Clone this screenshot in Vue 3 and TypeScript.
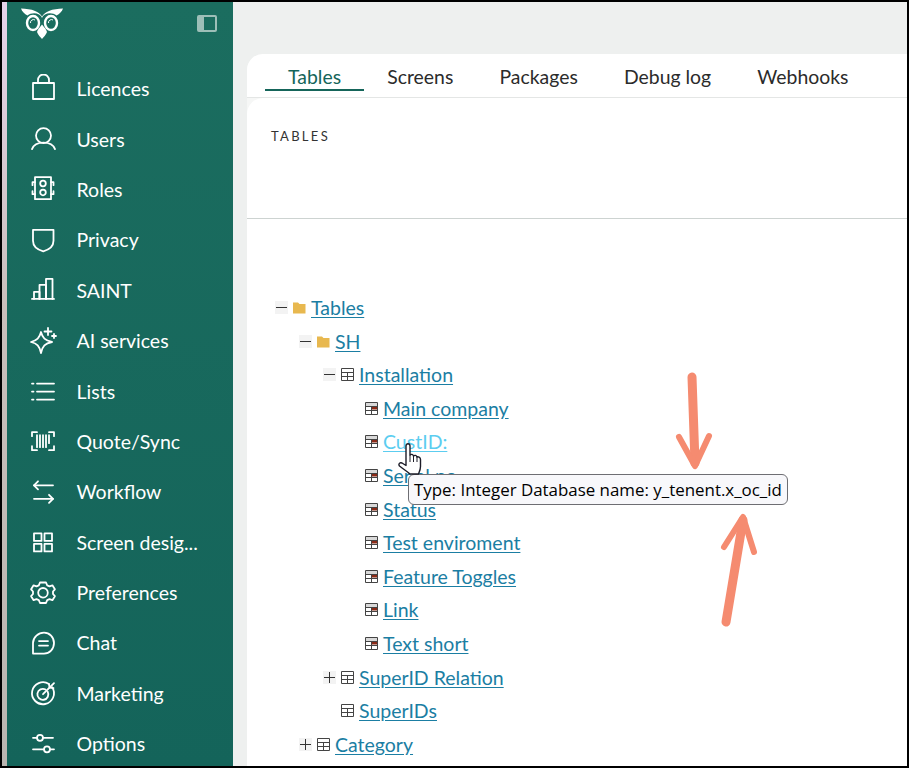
<script setup lang="ts">
interface NavItem {
  label: string
  paths: string[]
}

interface TreeRow {
  label: string
  level: number
  toggle?: 'minus' | 'plus'
  icon: 'folder' | 'table' | 'field'
  state?: string
}

const navItems: NavItem[] = [
  { label: 'Licences', paths: ['M33 83h21v16H33z', 'M38 83v-3a5.500 5.500 0 0 1 11 0v3'] },
  { label: 'Users', paths: ['M43.500 128.500a7.500 7.500 0 1 0 0 15a7.500 7.500 0 0 0 0-15z', 'M32 149.500c1.500-4 5.500-6.500 11.500-6.500s10 2.500 11.500 6.500'] },
  {
    label: 'Roles',
    paths: [
      'M35 178h16v22H35z',
      'M43 181.500a2.800 2.800 0 1 0 0 5.600a2.800 2.800 0 0 0 0-5.600z',
      'M43 190.500a2.800 2.800 0 1 0 0 5.600a2.800 2.800 0 0 0 0-5.600z',
      'M35 183h-2.500v3M35 195h-2.500v-3M51 183h2.500v3M51 195h2.500v-3'
    ]
  },
  { label: 'Privacy', paths: ['M33 230h20.500v11c0 5.500-4.500 9-10.250 10.500C37.500 250 33 246.500 33 241z'] },
  { label: 'SAINT', paths: ['M32 299.500h22', 'M34 299.500v-7h5.500v7', 'M39.500 299.500v-14h6.500v14', 'M46 299.500v-20h6.500v20'] },
  {
    label: 'AI services',
    paths: [
      'M41 332c1.500 6 4 8.500 11 10c-7 1.500-9.500 4-11 11c-1.500-7-4-9.500-10-11c6-1.500 8.500-4 10-10z',
      'M48 328v7M44.500 331.500h7',
      'M54 334v4M52 336h4'
    ]
  },
  { label: 'Lists', paths: ['M37 384h17', 'M37 392h17', 'M37 400h17', 'M32 384h1.500', 'M32 392h1.500', 'M32 400h1.500'] },
  {
    label: 'Quote/Sync',
    paths: [
      'M32 437v-4h5M49 433h5v4M54 447v4h-5M37 451h-5v-4',
      'M37 436v12M40 436v12M43 436v12M46 436v12M49 436v8'
    ]
  },
  { label: 'Workflow', paths: ['M34 485.500h19', 'M38 481.500l-4 4l4 4', 'M34 499h19', 'M49 495l4 4l-4 4'] },
  {
    label: 'Screen desig...',
    paths: [
      'M34 534h7.500v7.500H34z',
      'M44.500 534H52v7.500h-7.500z',
      'M34 544.500h7.500V552H34z',
      'M44.500 544.500H52V552h-7.500z'
    ]
  },
  {
    label: 'Preferences',
    paths: [
      'M40 582.500h6l1.200 2.800l2.300 1l2.900-1l2.500 4l-1.900 2.200v2.500l1.900 2.200l-2.500 4l-2.900-1l-2.300 1l-1.200 2.800h-6l-1.200-2.800l-2.300-1l-2.900 1l-2.500-4l1.900-2.200v-2.500l-1.900-2.200l2.500-4l2.900 1l2.300-1z',
      'M43 588a4.800 4.800 0 1 0 0 9.600a4.800 4.800 0 0 0 0-9.600z'
    ]
  },
  {
    label: 'Chat',
    paths: [
      'M44 633c5.500 0 10 4.500 10 10.500s-4.500 10.500-10 10.500H33v-10.500C33 637.500 38.500 633 44 633z',
      'M39 641.500h9',
      'M39 646h9'
    ]
  },
  {
    label: 'Marketing',
    paths: [
      'M49 684.800a11 11 0 1 0 3.200 3.200',
      'M45.500 690.300a5.500 5.500 0 1 0 2.200 2.200',
      'M43 695l11-11',
      'M49 685l.5 3.500l4 .5'
    ]
  },
  {
    label: 'Options',
    paths: [
      'M33 738h4M43 738h10',
      'M40 735a3 3 0 1 0 0 6a3 3 0 0 0 0-6z',
      'M33 749.500h11M50 749.500h4',
      'M47 746.500a3 3 0 1 0 0 6a3 3 0 0 0 0-6z'
    ]
  }
]

const tabs = ['Tables', 'Screens', 'Packages', 'Debug log', 'Webhooks']

const treeRows: TreeRow[] = [
  { label: 'Tables', level: 0, toggle: 'minus', icon: 'folder' },
  { label: 'SH', level: 1, toggle: 'minus', icon: 'folder' },
  { label: 'Installation', level: 2, toggle: 'minus', icon: 'table' },
  { label: 'Main company', level: 3, icon: 'field' },
  { label: 'CustID:', level: 3, icon: 'field', state: 'hover' },
  { label: 'Serial no', level: 3, icon: 'field' },
  { label: 'Status', level: 3, icon: 'field' },
  { label: 'Test enviroment', level: 3, icon: 'field' },
  { label: 'Feature Toggles', level: 3, icon: 'field' },
  { label: 'Link', level: 3, icon: 'field' },
  { label: 'Text short', level: 3, icon: 'field' },
  { label: 'SuperID Relation', level: 2, toggle: 'plus', icon: 'table' },
  { label: 'SuperIDs', level: 2, icon: 'table' },
  { label: 'Category', level: 1, toggle: 'plus', icon: 'table' }
]
</script>

<template>
  <div class="frame">
    <aside class="sidebar">
      <div class="brand">
        <svg class="owl" width="44" height="34" viewBox="0 0 44 34">
          <path fill="#fff" d="M1 1.500c5 .5 10 .5 14 2.500c3 1 5.500 3 7 5.500c1.500-2.500 4-4.500 7-5.500c4-2 9-2 14-2.500c-1 3-3.500 5.500-6.500 7c-3-2.500-8-3-11.500-1c-1.500 1-2.500 2-3 3.500c-.5-1.500-1.500-2.500-3-3.500c-3.500-2-8.500-1.500-11.500 1C4.500 7 2 4.500 1 1.500z" />
          <ellipse cx="13" cy="16" rx="6" ry="7" fill="none" stroke="#fff" stroke-width="2.400" />
          <ellipse cx="31" cy="16" rx="6" ry="7" fill="none" stroke="#fff" stroke-width="2.400" />
          <path fill="none" stroke="#fff" d="M10.500 16a3 3 0 0 1 4.500-3M28.500 16a3 3 0 0 1 4.500-3" />
          <path fill="#fff" d="M22 17.500c2 2.500 4.500 5 5 7.500c-1 3-3.500 5-5 7c-1.500-2-4-4-5-7c.5-2.500 3-5 5-7.500z" />
        </svg>
        <span class="collapse"><span class="collapse-fill"></span></span>
      </div>
      <nav class="nav">
        <a v-for="(item, i) in navItems" :key="item.label" class="nav-item">
          <svg class="nav-icon" width="30" height="30" :viewBox="`28 ${74 + i * 50.4} 30 30`">
            <path v-for="d in item.paths" :key="d" :d="d" />
          </svg>
          <span>{{ item.label }}</span>
        </a>
      </nav>
    </aside>

    <main class="main">
      <div class="card">
        <div class="tabs">
          <span v-for="(tab, i) in tabs" :key="tab" class="tab" :class="{ active: i === 0 }">{{ tab }}</span>
        </div>
        <section class="panel">
          <header class="panel-head">TABLES</header>
          <div class="tree">
            <div v-for="row in treeRows" :key="row.label" class="tree-row" :class="`level-${row.level}`">
              <span class="toggle" :class="row.toggle"></span>
              <svg v-if="row.icon === 'folder'" class="node-icon" width="13" height="13" viewBox="0 0 13 13">
                <path fill="#e8b84f" d="M0 1.500h5l1.500 1.500H12.500V12.500H0z" />
              </svg>
              <svg v-else class="node-icon" width="13" height="13" viewBox="0 0 13 13">
                <path fill="#fff" stroke="#444" d="M.5.500h12v12H.5z" />
                <path v-if="row.icon === 'field'" fill="#d9d9d9" d="M1 1h11v3H1z" />
                <path v-if="row.icon === 'field'" fill="#8a2a17" d="M6.500 4H12v3.500H6.500z" />
                <path fill="none" stroke="#444" d="M.5 4.500h12M.5 8.500h12M6.500 4.500v8" />
              </svg>
              <a class="node-link" :class="row.state">{{ row.label }}</a>
            </div>
          </div>
        </section>
      </div>
    </main>

    <div class="tooltip">Type: Integer Database name: y_tenent.x_oc_id</div>

    <svg class="cursor" width="26" height="34" viewBox="0 0 26 34">
      <path fill="#fff" stroke="#1c1c28" stroke-width="1.400" stroke-linejoin="round" d="M8 3c0-3 4-3 4 0v9c1-1 3-1 3.500 1c1-1 3-1 3.500 1c1-.5 3.500 0 3.500 2.500v7c0 3-1 5-2 7.500H12c-2-2-7-5-10.500-8c-1.500-2 .5-4 2.500-3l4 2.500z" />
      <path fill="none" stroke="#1c1c28" d="M12 12v7M15.500 13v6M19 14v5" />
    </svg>

    <svg class="arrows" width="120" height="270" viewBox="0 0 120 270">
      <path class="shaft" d="M26 9l3 86" />
      <path class="barbs" d="M13 69l16 29l14-30" />
      <path class="shaft" d="M60 254l17-102" />
      <path class="barbs" d="M58 179l19-30l11 35" />
    </svg>
  </div>
</template>

<style>
html,
body {
  margin: 0;
  background: #000;
}
</style>

<style scoped>
.frame {
  position: relative;
  box-sizing: border-box;
  width: 909px;
  height: 768px;
  border: 2px solid #000;
  display: flex;
  overflow: hidden;
  background: linear-gradient(#e6d3ea, #c9bfbb 40%, #b9b5b0) left / 5px 100% no-repeat #eef0ef;
  font-family: Lato, 'Noto Sans', sans-serif;
}

.sidebar {
  box-sizing: border-box;
  width: 226px;
  margin-left: 5px;
  flex: none;
  background: linear-gradient(#1b6d5f, #14645a);
  color: #fff;
}

.brand {
  height: 42px;
  display: flex;
  align-items: flex-start;
  justify-content: space-between;
  padding: 0 16px 0 12.500px;
}

.owl {
  margin-top: 5px;
}

.collapse {
  box-sizing: border-box;
  width: 20px;
  height: 17px;
  margin-top: 13px;
  border: 2px solid #9dbfb8;
  border-radius: 2px;
  display: block;
}

.collapse-fill {
  display: block;
  width: 5px;
  height: 100%;
  background: #9dbfb8;
}

.nav {
  padding-top: 19.500px;
}

.nav-item {
  height: 50.400px;
  display: flex;
  align-items: center;
  gap: 18.500px;
  padding-left: 21px;
  font-size: 19.500px;
}

.nav-icon {
  flex: none;
  fill: none;
  stroke: #fff;
  stroke-width: 1.800;
  stroke-linecap: round;
  stroke-linejoin: round;
}

.main {
  flex: 1;
  min-width: 0;
  padding: 52px 0 0 14px;
}

.card {
  height: 100%;
  background: #f6f7f6;
  border-top-left-radius: 16px;
  overflow: hidden;
}

.tabs {
  height: 43px;
  padding-left: 18px;
  display: flex;
  background: #fff;
  border-bottom: 1px solid #e4e6e5;
}

.tab {
  height: 37px;
  padding: 9px 23.100px 0;
  box-sizing: border-box;
  font-size: 19.400px;
  line-height: 27px;
  color: #2b2b2b;
}

.tab.active {
  color: #15655a;
  border-bottom: 2px solid #15655a;
}

.panel {
  height: 100%;
  background: #fff;
  border-top-left-radius: 16px;
}

.panel-head {
  box-sizing: border-box;
  height: 121px;
  padding: 30px 0 0 24px;
  font-size: 13px;
  line-height: 16px;
  letter-spacing: 2.300px;
  color: #333;
  border-bottom: 1px solid #cdd3d1;
}

.tree {
  padding-top: 71.800px;
}

.tree-row {
  height: 33.600px;
  display: flex;
  align-items: center;
  font-size: 19.500px;
}

.level-0 {
  padding-left: 28px;
}

.level-1 {
  padding-left: 52px;
}

.level-2 {
  padding-left: 76px;
}

.level-3 {
  padding-left: 100px;
}

.toggle {
  position: relative;
  flex: none;
  width: 13px;
  height: 13px;
  margin-right: 5px;
}

.toggle.minus,
.toggle.plus {
  background: #f3f3f3;
}

.toggle.minus::before,
.toggle.plus::before {
  content: '';
  position: absolute;
  left: 1px;
  right: 1px;
  top: 6px;
  height: 1px;
  background: #333;
}

.toggle.plus::after {
  content: '';
  position: absolute;
  top: 1px;
  bottom: 1px;
  left: 6px;
  width: 1px;
  background: #333;
}

.node-icon {
  flex: none;
  margin-right: 5px;
}

.node-link {
  color: #1b7ea3;
  text-decoration: underline;
  text-underline-offset: 2px;
  white-space: nowrap;
}

.node-link.hover {
  color: #5ccdf0;
}

.tooltip {
  position: absolute;
  left: 406px;
  top: 472px;
  box-sizing: border-box;
  height: 31px;
  padding: 0 5px;
  background: #f8f8fb;
  border: 1px solid #6e6e73;
  border-radius: 6px;
  font-family: 'Open Sans', 'Noto Sans', sans-serif;
  font-size: 16.900px;
  line-height: 29px;
  color: #000;
  white-space: nowrap;
}

.cursor {
  position: absolute;
  left: 396px;
  top: 441px;
}

.arrows {
  position: absolute;
  left: 664px;
  top: 366px;
  fill: none;
  stroke: #f58b70;
  stroke-linecap: round;
  stroke-linejoin: round;
}

.shaft {
  stroke-width: 9px;
}

.barbs {
  stroke-width: 6px;
}
</style>
